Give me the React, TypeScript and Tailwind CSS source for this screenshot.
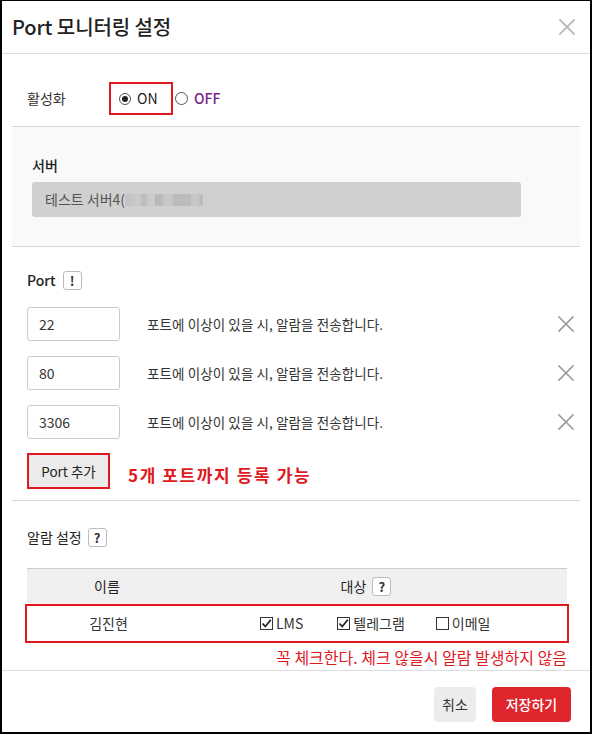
import React from "react";

const F = { fontFamily: '"Noto Sans CJK KR", "Noto Sans", sans-serif' };

function XIcon({ className, w = 1.8 }: { className?: string; w?: number }) {
  return (
    <svg className={className} width="18" height="18" viewBox="0 0 18 18" fill="none">
      <path d="M2 2 L16 16 M16 2 L2 16" stroke="currentColor" strokeWidth={w} strokeLinecap="square" />
    </svg>
  );
}

function HelpBox({ ch }: { ch: string }) {
  return (
    <span className="inline-flex items-center justify-center w-[19px] h-[19px] border border-[#bbb] rounded-[3px] text-[13px] font-bold text-[#333] leading-none bg-white">
      {ch}
    </span>
  );
}

function Check({ on }: { on: boolean }) {
  return (
    <span className="inline-flex items-center justify-center w-[13px] h-[13px] border border-[#333] bg-white">
      {on && (
        <svg width="11" height="11" viewBox="0 0 11 11">
          <path d="M1.5 5.5 L4.3 8.5 L9.8 1.8" stroke="#222" strokeWidth="1.8" fill="none" />
        </svg>
      )}
    </span>
  );
}

function PortRow({ v }: { v: string }) {
  return (
    <div className="flex items-center h-[34px]">
      <div className="w-[93px] h-[34px] border border-[#ccc] rounded-[3px] bg-white flex items-center pl-[11px] text-[14px] text-[#333]">
        {v}
      </div>
      <div className="ml-[27px] text-[13.5px] text-[#333] tracking-[0.1px]">포트에 이상이 있을 시, 알람을 전송합니다.</div>
      <XIcon className="ml-auto -mr-[5px] text-[#9a9a9a]" w={1.6} />
    </div>
  );
}

export default function App() {
  return (
    <div style={F} className="w-[592px] h-[734px] bg-white border-x-2 border-b-2 border-t border-black flex flex-col text-[#333] overflow-hidden">
      {/* header */}
      <div className="h-[53px] border-b border-[#ddd] flex items-center justify-between pl-[10px] pr-[14px]">
        <div className="text-[20px] text-[#222] tracking-[-0.1px] font-medium">Port 모니터링 설정</div>
        <XIcon className="text-[#bbb]" />
      </div>

      <div className="px-[10px] flex flex-col">
        {/* 활성화 */}
        <div className="h-[73px] border-b border-[#d5d5d5] flex items-start pl-[15px] pt-[28px]">
          <div className="w-[82px] text-[14px] h-[33px] flex items-center">활성화</div>
          <div className="flex items-center">
            <div className="h-[33px] w-[64px] border-2 border-[#e0191f] flex items-center pl-[8px] gap-[6px]">
              <span className="w-[12px] h-[12px] rounded-full border border-[#555] flex items-center justify-center">
                <span className="w-[6px] h-[6px] rounded-full bg-[#222]" />
              </span>
              <span className="text-[14px] text-[#222]">ON</span>
            </div>
            <div className="flex items-center gap-[6px] ml-[2px]">
              <span className="w-[13px] h-[13px] rounded-full border border-[#555] bg-white" />
              <span className="text-[14px] text-[#7a1f8a] font-medium">OFF</span>
            </div>
          </div>
        </div>

        {/* 서버 */}
        <div className="h-[120px] border-b border-[#d5d5d5] bg-[#f9f9f9] px-[20px] pt-[28px]">
          <div className="text-[14px] font-medium text-[#222]">서버</div>
          <div className="mt-[6px] w-[489px] h-[35px] bg-[#d0d0d0] rounded-[3px] flex items-center pl-[13px] text-[14px] text-[#555]">
            <span>테스트 서버4(</span>
            <span className="flex items-center">
              <span className="w-[8px] h-[12px] bg-[#c4c4c4]" />
              <span className="w-[8px] h-[12px] bg-[#c9c9c9]" />
              <span className="w-[6px] h-[12px] bg-[#bdbdbd]" />
              <span className="w-[8px] h-[12px] bg-[#cacaca]" />
              <span className="w-[8px] h-[12px] bg-[#b9b9b9]" />
              <span className="w-[10px] h-[12px] bg-[#c8c8c8]" />
              <span className="w-[18px] h-[12px] bg-[#bbbbbb]" />
              <span className="w-[8px] h-[12px] bg-[#c6c6c6]" />
              <span className="w-[4px] h-[12px] bg-[#bdbdbd]" />
            </span>
          </div>
        </div>

        {/* Port */}
        <div className="h-[254px] border-b border-[#d5d5d5] pl-[15px] pr-[10px] pt-[23px]">
          <div className="flex items-center gap-[7px]">
            <span className="text-[14px] font-medium text-[#222]">Port</span>
            <HelpBox ch="!" />
          </div>
          <div className="mt-[16px] flex flex-col gap-[15px]">
            <PortRow v="22" />
            <PortRow v="80" />
            <PortRow v="3306" />
          </div>
          <div className="mt-[14px] flex items-center">
            <div className="w-[83px] h-[36px] border-2 border-[#e0191f] bg-[#ebebeb] flex items-center justify-center text-[13.5px] text-[#222]">
              Port 추가
            </div>
            <span className="ml-[18px] mt-[8px] text-[17px] font-bold tracking-[1.6px] text-[#e0191f]">
              5개 포트까지 등록 가능
            </span>
          </div>
        </div>

        {/* 알람 설정 */}
        <div className="pl-[15px] pr-[13px] pt-[26px]">
          <div className="flex items-center gap-[6px]">
            <span className="text-[14px] text-[#222]">알람 설정</span>
            <HelpBox ch="?" />
          </div>
          <div className="mt-[20px] border-t border-[#ccc]">
            <div className="h-[35px] bg-[#f0f0f0] flex items-center text-[14px] text-[#222]">
              <div className="w-[160px] text-center">이름</div>
              <div className="flex-1 flex items-center justify-center gap-[6px] pr-[22px]">
                <span>대상</span>
                <HelpBox ch="?" />
              </div>
            </div>
            <div className="-mx-[2px] h-[39px] border-2 border-[#e0191f] flex items-center text-[14px] text-[#333]">
              <div className="w-[163px] text-center">김진현</div>
              <div className="flex items-center ml-[70px]">
                <span className="flex items-center gap-[3px]"><Check on /> LMS</span>
                <span className="flex items-center gap-[3px] ml-[34px]"><Check on /> 텔레그램</span>
                <span className="flex items-center gap-[3px] ml-[31px]"><Check on={false} /> 이메일</span>
              </div>
            </div>
          </div>
          <div className="text-right text-[16px] text-[#e0191f] mt-[3px] leading-[22px]">꼭 체크한다. 체크 않을시 알람 발생하지 않음</div>
        </div>
      </div>

      {/* footer */}
      <div className="mt-[2px] border-t border-[#ddd] flex-1 flex items-start justify-end pt-[16px] pr-[19px] gap-[16px]">
        <div className="w-[42px] h-[35px] rounded-[4px] bg-[#ececec] flex items-center justify-center text-[14px] text-[#333]">취소</div>
        <div className="w-[79px] h-[35px] rounded-[4px] bg-[#e0262d] flex items-center justify-center text-[14px] text-white font-medium">저장하기</div>
      </div>
    </div>
  );
}
